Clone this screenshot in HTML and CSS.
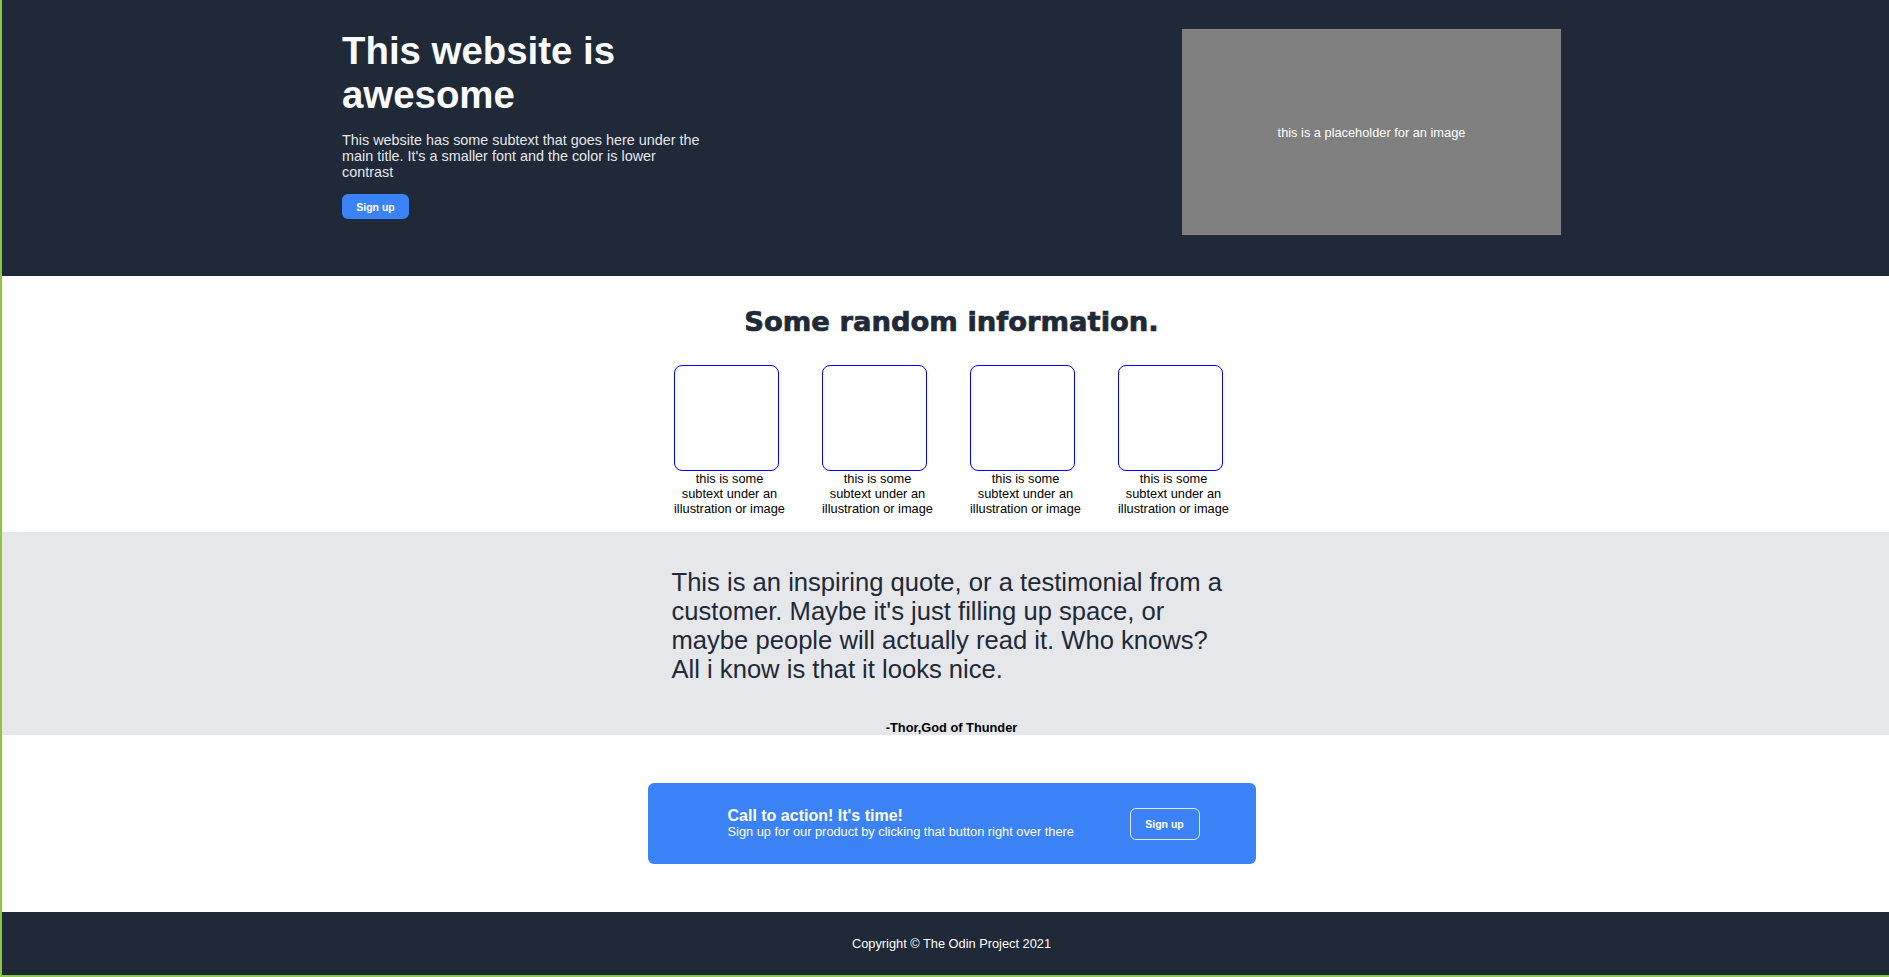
FILE: index.html
```html
<!DOCTYPE html>
<html lang="en">
<head>
<meta charset="utf-8">
<title>Landing page</title>
<link rel="stylesheet" href="styles.css">
</head>
<body>
<div class="page">
  <section class="hero">
    <div class="hero-inner">
      <div class="hero-text">
        <h1 class="hero-title">This website is awesome</h1>
        <p class="hero-sub">This website has some subtext that goes here under the main title. It's a smaller font and the color is lower contrast</p>
        <button class="btn-primary">Sign up</button>
      </div>
      <div class="placeholder">this is a placeholder for an image</div>
    </div>
  </section>

  <section class="info">
    <h2 class="info-title">Some random information.</h2>
    <div class="cards">
      <div class="card"><div class="card-box"></div><div class="card-text">this is some subtext under an illustration or image</div></div>
      <div class="card"><div class="card-box"></div><div class="card-text">this is some subtext under an illustration or image</div></div>
      <div class="card"><div class="card-box"></div><div class="card-text">this is some subtext under an illustration or image</div></div>
      <div class="card"><div class="card-box"></div><div class="card-text">this is some subtext under an illustration or image</div></div>
    </div>
  </section>

  <section class="quote">
    <div class="quote-inner">
      <p class="quote-text">This is an inspiring quote, or a testimonial from a customer. Maybe it's just filling up space, or maybe people will actually read it. Who knows? All i know is that it looks nice.</p>
      <div class="quote-author">-Thor,God of Thunder</div>
    </div>
  </section>

  <section class="cta">
    <div class="cta-box">
      <div class="cta-text">
        <div class="cta-title">Call to action! It's time!</div>
        <div class="cta-sub">Sign up for our product by clicking that button right over there</div>
      </div>
      <button class="btn-outline">Sign up</button>
    </div>
  </section>

  <footer class="footer">Copyright © The Odin Project 2021</footer>
</div>
</body>
</html>
```

FILE: styles.css
```css
html, body {
  margin: 0;
  padding: 0;
}

body {
  font-family: "Liberation Sans", Arial, sans-serif;
  font-size: 12.8px;
  color: #000;
  background: #fff;
}

.page {
  border-left: 2px solid #8cc541;
  border-bottom: 2px solid #8cc541;
}

section, .footer {
  padding-left: 12px;
}

/* Hero */
.hero {
  background: #1f2937;
  height: 276px;
  box-sizing: border-box;
  padding-top: 28px;
}

.hero-inner {
  width: 1219px;
  margin: 0 auto;
  display: flex;
  justify-content: space-between;
  align-items: flex-start;
}

.hero-text {
  width: 362px;
  padding-top: 1px;
}

.hero-title {
  margin: 0 0 15px;
  font-size: 38.4px;
  line-height: 44px;
  font-weight: bold;
  color: #f9fafb;
}

.hero-sub {
  margin: 0 0 14px;
  font-size: 14.4px;
  line-height: 16px;
  color: #e5e7eb;
}

.btn-primary {
  display: block;
  width: 67px;
  height: 25px;
  padding: 0;
  border: none;
  border-radius: 6px;
  background: #3b82f6;
  color: #fff;
  font-family: "Liberation Sans", Arial, sans-serif;
  font-size: 10.5px;
  font-weight: bold;
}

.placeholder {
  margin-top: 1px;
  width: 379px;
  height: 206px;
  background: #808080;
  color: #fff;
  font-size: 12.8px;
  display: flex;
  align-items: center;
  justify-content: center;
}

/* Info */
.info {
  height: 256px;
  box-sizing: border-box;
  padding-top: 29px;
}

.info-title {
  margin: 0 0 27px;
  text-align: center;
  font-family: "DejaVu Sans", "Liberation Sans", sans-serif;
  font-size: 27.4px;
  line-height: 33px;
  font-weight: bold;
  color: #1f2937;
  -webkit-text-stroke: 0.7px #1f2937;
}

.cards {
  display: flex;
  justify-content: center;
  gap: 37px;
}

.card {
  width: 111px;
  display: flex;
  flex-direction: column;
  align-items: flex-start;
}

.card-box {
  width: 105px;
  height: 106px;
  box-sizing: border-box;
  border: 1px solid #0000ff;
  border-radius: 8px;
}

.card-text {
  width: 111px;
  text-align: center;
  font-size: 12.8px;
  line-height: 15px;
  color: #000;
}

/* Quote */
.quote {
  background: #e5e7eb;
  height: 203px;
  box-sizing: border-box;
  padding-top: 36px;
}

.quote-inner {
  width: 560px;
  margin: 0 auto;
}

.quote-text {
  margin: 0 0 36px;
  font-size: 25.6px;
  line-height: 29px;
  color: #1f2937;
}

.quote-author {
  text-align: center;
  font-size: 12.8px;
  line-height: 15px;
  font-weight: bold;
  color: #000;
}

/* CTA */
.cta {
  padding-top: 48px;
  padding-bottom: 48px;
}

.cta-box {
  width: 608px;
  height: 81px;
  box-sizing: border-box;
  margin: 0 auto;
  padding: 0 56px 0 80px;
  background: #3b82f6;
  border-radius: 6px;
  display: flex;
  align-items: center;
  justify-content: space-between;
  color: #fff;
}

.cta-title {
  font-size: 16px;
  font-weight: bold;
  line-height: 18.4px;
}

.cta-sub {
  font-size: 12.8px;
  line-height: 14.7px;
}

.btn-outline {
  width: 70px;
  height: 32px;
  padding: 0;
  background: transparent;
  border: 1px solid #e5e7eb;
  border-radius: 6px;
  color: #fff;
  font-family: "Liberation Sans", Arial, sans-serif;
  font-size: 10.5px;
  font-weight: bold;
}

/* Footer */
.footer {
  background: #1f2937;
  height: 63px;
  display: flex;
  align-items: center;
  justify-content: center;
  color: #fff;
  font-size: 12.8px;
}
```
